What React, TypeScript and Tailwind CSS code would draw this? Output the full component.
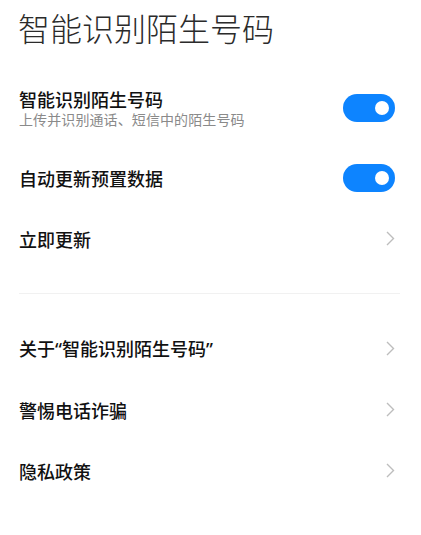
import React from "react";

const font = { fontFamily: '"Noto Sans CJK SC", "Noto Sans", sans-serif' };
const latin = { fontFamily: '"Noto Sans", "Noto Sans CJK SC", sans-serif' };

function Toggle() {
  return (
    <div className="w-[52px] h-[28px] rounded-full bg-[#0d84ff] flex items-center justify-end pr-[6px]">
      <div className="w-[14px] h-[14px] rounded-full bg-white" />
    </div>
  );
}

function Chevron() {
  return (
    <svg width="9" height="15" viewBox="0 0 9 15" fill="none">
      <polyline points="1,1 7.5,7.5 1,14" stroke="#bdbdbd" strokeWidth="1.4" strokeLinejoin="miter" />
    </svg>
  );
}

function LinkRow({ children }: { children: React.ReactNode }) {
  return (
    <div className="h-[61px] flex items-center justify-between pl-[19px] pr-[26px]">
      <span className="text-[18px] leading-[24px] font-medium text-[#111111]">{children}</span>
      <Chevron />
    </div>
  );
}

export default function App() {
  return (
    <div className="w-[421px] h-[535px] bg-white overflow-hidden" style={font}>
      <div className="h-[69px] pt-[7px] pl-[18px]">
        <h1 className="text-[32px] leading-[40px] font-light text-[#2b2b2b]">智能识别陌生号码</h1>
      </div>
      <div className="h-[78px] flex items-center justify-between pl-[19px] pr-[26px]">
        <div className="flex flex-col">
          <span className="text-[18px] leading-[22px] font-medium text-[#111111]">智能识别陌生号码</span>
          <span className="text-[14px] leading-[18px] text-[#8a8a8a] tracking-[0.1px]">上传并识别通话、短信中的陌生号码</span>
        </div>
        <Toggle />
      </div>
      <div className="h-[61px] flex items-center justify-between pl-[19px] pr-[26px]">
        <span className="text-[18px] leading-[24px] font-medium text-[#111111]">自动更新预置数据</span>
        <Toggle />
      </div>
      <LinkRow>立即更新</LinkRow>
      <div className="h-[49px] flex items-center">
        <div className="ml-[19px] mr-[21px] flex-1 h-px bg-[#f1f1f1]" />
      </div>
      <LinkRow>
        关于<span style={latin}>“</span>智能识别陌生号码<span style={latin}>”</span>
      </LinkRow>
      <LinkRow>警惕电话诈骗</LinkRow>
      <LinkRow>隐私政策</LinkRow>
    </div>
  );
}
